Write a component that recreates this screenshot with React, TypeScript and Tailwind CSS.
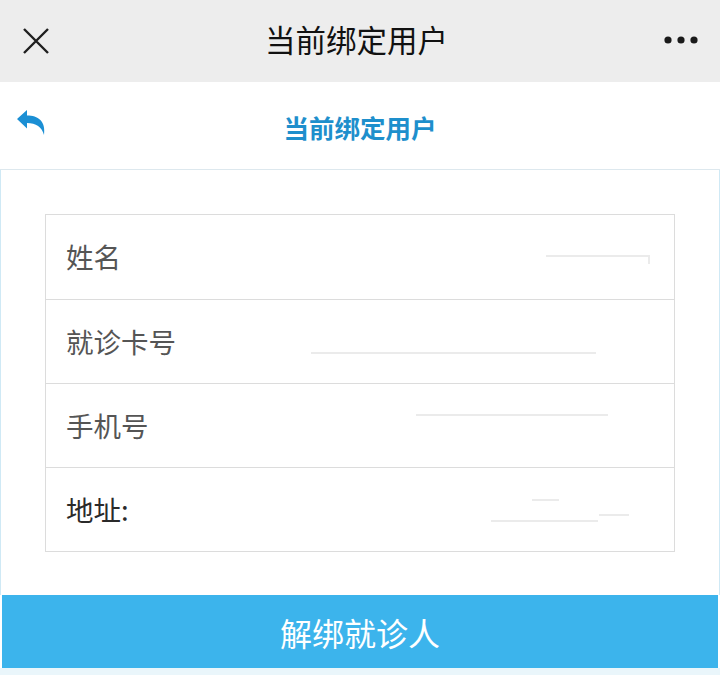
import React from "react";

const font = { fontFamily: '"Noto Sans CJK SC", "Noto Sans", sans-serif' };

type Row = {
  label: string;
  dark?: boolean;
  marks: { left: number; top: number; width: number }[];
};

const rows: Row[] = [
  { label: "姓名", marks: [{ left: 500, top: 40, width: 103 }] },
  { label: "就诊卡号", marks: [{ left: 265, top: 52, width: 285 }] },
  { label: "手机号", marks: [{ left: 370, top: 30, width: 192 }] },
  {
    label: "地址:",
    dark: true,
    marks: [
      { left: 486, top: 31, width: 27 },
      { left: 445, top: 52, width: 107 },
      { left: 553, top: 46, width: 30 },
    ],
  },
];

export default function App() {
  return (
    <div className="w-[720px] h-[675px] flex flex-col bg-white overflow-hidden" style={font}>
      {/* WeChat top bar */}
      <div className="h-[82px] bg-[#ededed] flex items-center justify-between px-[22px]">
        <svg width="28" height="28" viewBox="0 0 28 28">
          <path d="M2 2 L26 26 M26 2 L2 26" stroke="#1f1f1f" strokeWidth="2.4" fill="none" />
        </svg>
        <span className="text-[30.5px] text-[#111] leading-none -mt-[3px]">当前绑定用户</span>
        <svg width="36" height="10" viewBox="0 0 36 10" className="mr-[-1px] -mt-[3px]">
          <circle cx="5" cy="5" r="3.6" fill="#1a1a1a" />
          <circle cx="18" cy="5" r="3.6" fill="#1a1a1a" />
          <circle cx="31" cy="5" r="3.6" fill="#1a1a1a" />
        </svg>
      </div>

      {/* page header */}
      <div className="h-[88px] flex items-center relative border-b border-[#dde8ee]">
        <svg width="30" height="26" viewBox="0 0 30 26" className="absolute left-[17px] top-[28px]">
          <path
            d="M0 9 L10 0 L10 5.5 C21 5.5 29 11 27 25 C25 17 19 13 10 13 L10 18.5 Z"
            fill="#1b8fd4"
          />
        </svg>
        <span className="mx-auto text-[25.5px] font-bold text-[#1e8fcc] leading-none mt-[2px]">
          当前绑定用户
        </span>
      </div>

      {/* content */}
      <div className="flex-1 border-x border-[#cfe9f5] px-[44px] pt-[44px]">
        <div className="border border-[#dcdcdc] bg-white">
          {rows.map((r, i) => (
            <div
              key={r.label}
              className={`relative h-[84px] flex items-center pl-[20px] ${
                i > 0 ? "border-t border-[#dcdcdc]" : ""
              }`}
            >
              <span
                className={`text-[27.5px] leading-none ${
                  r.dark ? "text-[#2a2a2a]" : "text-[#555555]"
                }`}
              >
                {r.label}
              </span>
              {r.marks.map((m, j) => (
                <div
                  key={j}
                  className="absolute h-[2px] bg-[#ebebeb]"
                  style={{ left: m.left, top: m.top, width: m.width }}
                />
              ))}
              {i === 0 && (
                <div className="absolute left-[602px] top-[40px] w-[2px] h-[9px] bg-[#ebebeb]" />
              )}
            </div>
          ))}
        </div>
      </div>

      {/* unbind button */}
      <button className="h-[73px] mx-[2px] bg-[#3cb4ec] text-white text-[32px] leading-none flex items-center justify-center">
        解绑就诊人
      </button>
      <div className="h-[7px] bg-[#eaf6fb]" />
    </div>
  );
}
